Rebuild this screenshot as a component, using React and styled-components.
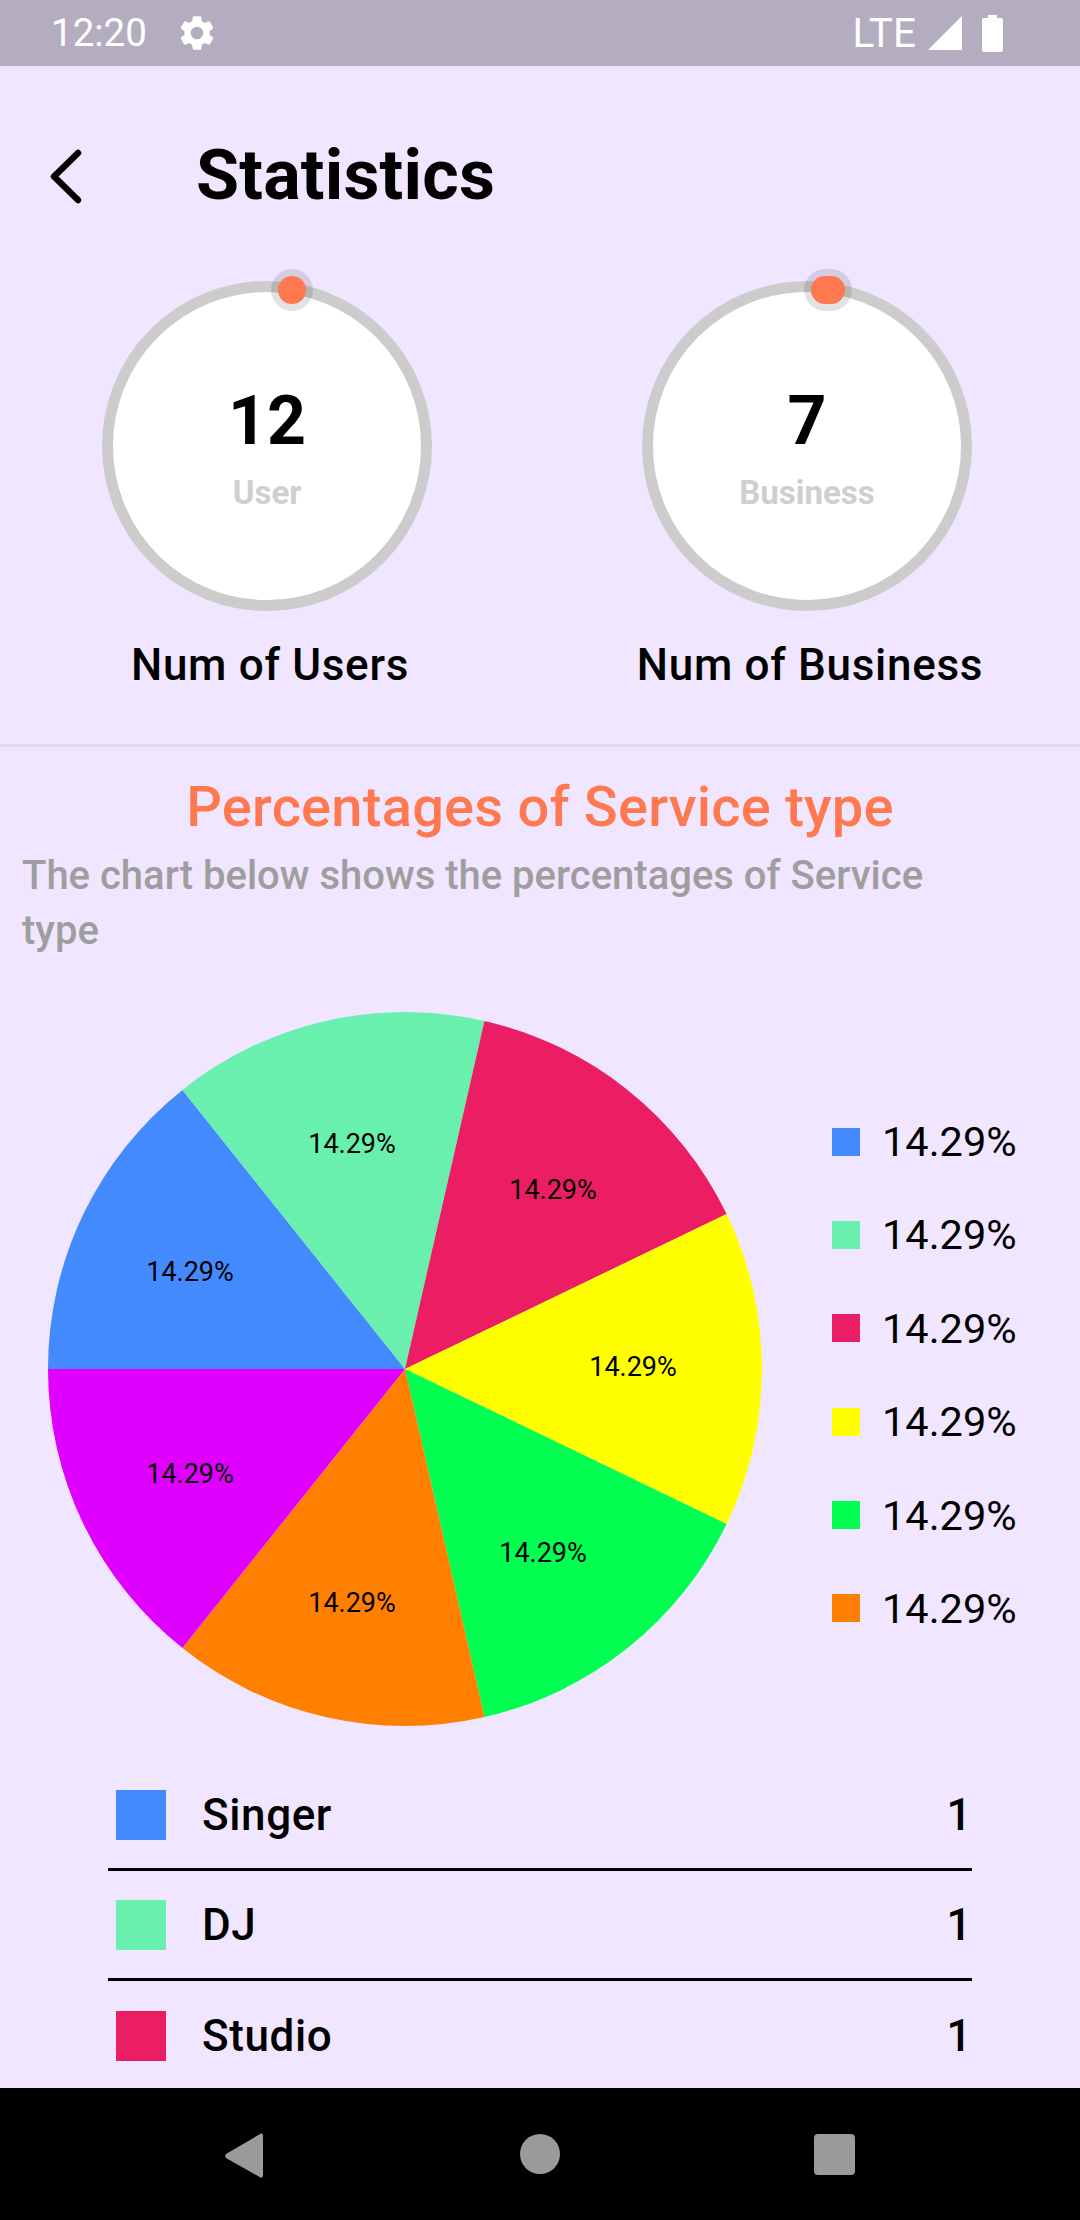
import React from "react";
import styled, { createGlobalStyle } from "styled-components";

const Global = createGlobalStyle`
  html, body { margin: 0; padding: 0; background: #000; }
  * { box-sizing: border-box; }
`;

const Screen = styled.div`
  width: 1080px;
  height: 2220px;
  display: flex;
  flex-direction: column;
  overflow: hidden;
  background: #f0e6ff;
  font-family: Roboto, "Liberation Sans", sans-serif;
  color: #000;
`;

const StatusBar = styled.div`
  height: 66px;
  flex: none;
  background: #b4acbf;
  color: #fff;
  display: flex;
  align-items: center;
  padding: 0 77px 0 51px;
`;
const Clock = styled.span`
  font-size: 38.5px;
  line-height: 66px;
  margin-right: 29px;
  font-weight: 400;
`;
const Network = styled.span`
  font-size: 40.5px;
  line-height: 66px;
  margin-left: auto;
  margin-right: 12px;
`;
const StatusIcon = styled.svg`
  display: block;
  flex: none;
  margin-right: ${(p) => p.$gap || 0}px;
`;

const Main = styled.main`
  flex: 1;
  min-height: 0;
  overflow: hidden;
`;

const Header = styled.header`
  height: 208px;
  display: flex;
  align-items: center;
  padding: 0 0 0 48px;
`;
const BackIcon = styled.svg`
  display: block;
  width: 36px;
  height: 56px;
  margin-right: 112px;
  margin-top: 12px;
`;
const Title = styled.h1`
  margin: 10px 0 0;
  font-size: 70px;
  line-height: 80px;
  font-weight: 700;
  letter-spacing: 0.2px;
`;

const Stats = styled.section`
  display: grid;
  grid-template-columns: 540px 540px;
  height: 473px;
  border-bottom: 3px solid #dfdce2;
`;
const Stat = styled.div`
  display: flex;
  flex-direction: column;
  align-items: center;
`;
const Ring = styled.div`
  position: relative;
  width: 330px;
  height: 330px;
  margin: 7px 6px 0 0;
  border: 11px solid #cccccc;
  border-radius: 50%;
  background: #fff;
  display: flex;
  flex-direction: column;
  align-items: center;
  padding-top: 89px;
`;
const Halo = styled.div`
  position: absolute;
  top: -23px;
  left: ${(p) => p.$left}px;
  width: ${(p) => p.$width}px;
  height: 42px;
  border-radius: 21px;
  background: rgba(0, 0, 0, 0.11);
  display: flex;
  align-items: center;
  justify-content: center;
`;
const Dot = styled.div`
  width: calc(100% - 14px);
  height: 28px;
  border-radius: 14px;
  background: #ff7850;
`;
const Count = styled.div`
  font-size: 68px;
  line-height: 80px;
  font-weight: 700;
`;
const CountLabel = styled.div`
  font-size: 33px;
  line-height: 38px;
  font-weight: 700;
  color: #cfcfcf;
  margin-top: 13px;
`;
const StatCaption = styled.div`
  margin-top: 28px;
  font-size: 44px;
  line-height: 52px;
  font-weight: 500;
  letter-spacing: 0.7px;
`;

const Section = styled.section`
  padding: 0 22px;
`;
const SectionTitle = styled.h2`
  margin: 0;
  padding-top: 29px;
  text-align: center;
  font-size: 56px;
  line-height: 62px;
  font-weight: 500;
  letter-spacing: 0.25px;
  color: #ff7850;
`;
const SectionText = styled.p`
  margin: 10px 0 0;
  width: 940px;
  font-size: 40px;
  line-height: 55px;
  font-weight: 500;
  color: #9e9e9e;
`;

const ChartRow = styled.div`
  height: 716px;
  margin-top: 53px;
  display: flex;
`;
const PieSvg = styled.svg`
  display: block;
  flex: none;
  width: 760px;
  height: 716px;
`;
const PieLabel = styled.text`
  font-family: Roboto, "Liberation Sans", sans-serif;
  font-size: 27px;
  fill: #000;
  text-anchor: middle;
  dominant-baseline: central;
`;
const Legend = styled.ul`
  list-style: none;
  margin: 0 0 0 50px;
  padding: 107px 0 0;
  display: flex;
  flex-direction: column;
  gap: 46.4px;
`;
const LegendRow = styled.li`
  display: flex;
  align-items: center;
  height: 47px;
  font-size: 41.5px;
`;
const LegendSwatch = styled.span`
  width: 28px;
  height: 28px;
  margin-right: 22px;
  background: ${(p) => p.$color};
`;

const List = styled.div`
  margin-top: 34px;
  padding: 0 108px;
`;
const Row = styled.div`
  display: flex;
  align-items: center;
  height: 110px;
  padding: 0 0 0 8px;
  border-bottom: ${(p) => (p.$last ? "none" : "3px solid #000")};
  font-size: 44px;
  font-weight: 500;
  letter-spacing: 0.6px;
`;
const RowSwatch = styled.span`
  width: 50px;
  height: 50px;
  margin-right: 36px;
  background: ${(p) => p.$color};
`;
const RowName = styled.span`
  flex: 1;
`;

const NavBar = styled.nav`
  height: 132px;
  flex: none;
  background: #000;
`;
const NavSvg = styled.svg`
  display: block;
`;

const slices = [
  { name: "Singer", color: "#448aff", x: 190, y: 1272 },
  { name: "DJ", color: "#69f0ae", x: 352, y: 1144 },
  { name: "Studio", color: "#eb1e63", x: 553, y: 1190 },
  { name: "", color: "#ffff00", x: 633, y: 1367 },
  { name: "", color: "#00ff50", x: 543, y: 1553 },
  { name: "", color: "#ff8000", x: 352, y: 1603 },
  { name: "", color: "#e000ff", x: 190, y: 1474 },
];

const CX = 383;
const CY = 358;
const R = 357;
const TOP = 1011;
const LEFT = 22;

function slicePath(i) {
  const step = (Math.PI * 2) / 7;
  const a0 = Math.PI + i * step;
  const a1 = a0 + step;
  const p = (a) => `${CX + R * Math.cos(a)} ${CY + R * Math.sin(a)}`;
  return `M${CX} ${CY}L${p(a0)}A${R} ${R} 0 0 1 ${p(a1)}Z`;
}

function StatCard({ count, label, caption, haloLeft, haloWidth }) {
  return (
    <Stat>
      <Ring>
        <Halo $left={haloLeft} $width={haloWidth}>
          <Dot />
        </Halo>
        <Count>{count}</Count>
        <CountLabel>{label}</CountLabel>
      </Ring>
      <StatCaption>{caption}</StatCaption>
    </Stat>
  );
}

export default function App() {
  return (
    <Screen>
      <Global />
      <StatusBar>
        <Clock>12:20</Clock>
        <StatusIcon width="42" height="42" viewBox="0 0 24 24" fill="#fff">
          <path d="M19.14 12.94c.04-.3.06-.61.06-.94 0-.32-.02-.64-.07-.94l2.03-1.58a.49.49 0 0 0 .12-.61l-1.92-3.32a.49.49 0 0 0-.59-.22l-2.39.96c-.5-.38-1.03-.7-1.62-.94l-.36-2.54a.48.48 0 0 0-.48-.41h-3.84c-.24 0-.43.17-.47.41l-.36 2.54c-.59.24-1.13.57-1.62.94l-2.39-.96a.49.49 0 0 0-.59.22L2.74 8.87c-.12.21-.08.47.12.61l2.03 1.58c-.05.3-.09.63-.09.94s.02.64.07.94l-2.03 1.58a.49.49 0 0 0-.12.61l1.92 3.32c.12.22.37.29.59.22l2.39-.96c.5.38 1.03.7 1.62.94l.36 2.54c.05.24.24.41.48.41h3.84c.24 0 .44-.17.47-.41l.36-2.54c.59-.24 1.13-.56 1.62-.94l2.39.96c.22.08.47 0 .59-.22l1.92-3.32c.12-.22.07-.47-.12-.61l-2.01-1.58zM12 15.6A3.6 3.6 0 1 1 12 8.4a3.6 3.6 0 0 1 0 7.2z" />
        </StatusIcon>
        <Network>LTE</Network>
        <StatusIcon width="34" height="36" viewBox="0 0 34 36" fill="#fff" $gap={20}>
          <path d="M34 1V35H0Z" />
        </StatusIcon>
        <StatusIcon width="21" height="37" viewBox="0 0 21 37" fill="#fff">
          <path d="M6 0h9v3h4a2 2 0 0 1 2 2v30a2 2 0 0 1-2 2H2a2 2 0 0 1-2-2V5a2 2 0 0 1 2-2h4Z" />
        </StatusIcon>
      </StatusBar>

      <Main>
        <Header>
          <BackIcon viewBox="0 0 36 56" fill="none" stroke="#000" strokeWidth="6.5" strokeLinecap="round" strokeLinejoin="round">
            <polyline points="30,5 6,28.5 30,52" />
          </BackIcon>
          <Title>Statistics</Title>
        </Header>

        <Stats>
          <StatCard count="12" label="User" caption="Num of Users" haloLeft={158} haloWidth={42} />
          <StatCard count="7" label="Business" caption="Num of Business" haloLeft={151} haloWidth={48} />
        </Stats>

        <Section>
          <SectionTitle>Percentages of Service type</SectionTitle>
          <SectionText>The chart below shows the percentages of Service type</SectionText>
          <ChartRow>
            <PieSvg viewBox="0 0 760 716">
              {slices.map((s, i) => (
                <path key={i} d={slicePath(i)} fill={s.color} />
              ))}
              {slices.map((s, i) => (
                <PieLabel key={i} x={s.x - LEFT} y={s.y - TOP}>
                  14.29%
                </PieLabel>
              ))}
            </PieSvg>
            <Legend>
              {slices.slice(0, 6).map((s, i) => (
                <LegendRow key={i}>
                  <LegendSwatch $color={s.color} />
                  14.29%
                </LegendRow>
              ))}
            </Legend>
          </ChartRow>
        </Section>

        <List>
          {slices.slice(0, 3).map((s, i) => (
            <Row key={s.name} $last={i === 2}>
              <RowSwatch $color={s.color} />
              <RowName>{s.name}</RowName>
              1
            </Row>
          ))}
        </List>
      </Main>

      <NavBar>
        <NavSvg width="1080" height="132" viewBox="0 0 1080 132" fill="#9a9a9a">
          <path d="M261 45.5a2 2 0 0 1 2 1.5v41a2 2 0 0 1-2.5 1.5L226 70a3 3 0 0 1 0-4Z" />
          <circle cx="540" cy="66" r="20" />
          <rect x="814" y="46" width="41" height="41" rx="4" />
        </NavSvg>
      </NavBar>
    </Screen>
  );
}
